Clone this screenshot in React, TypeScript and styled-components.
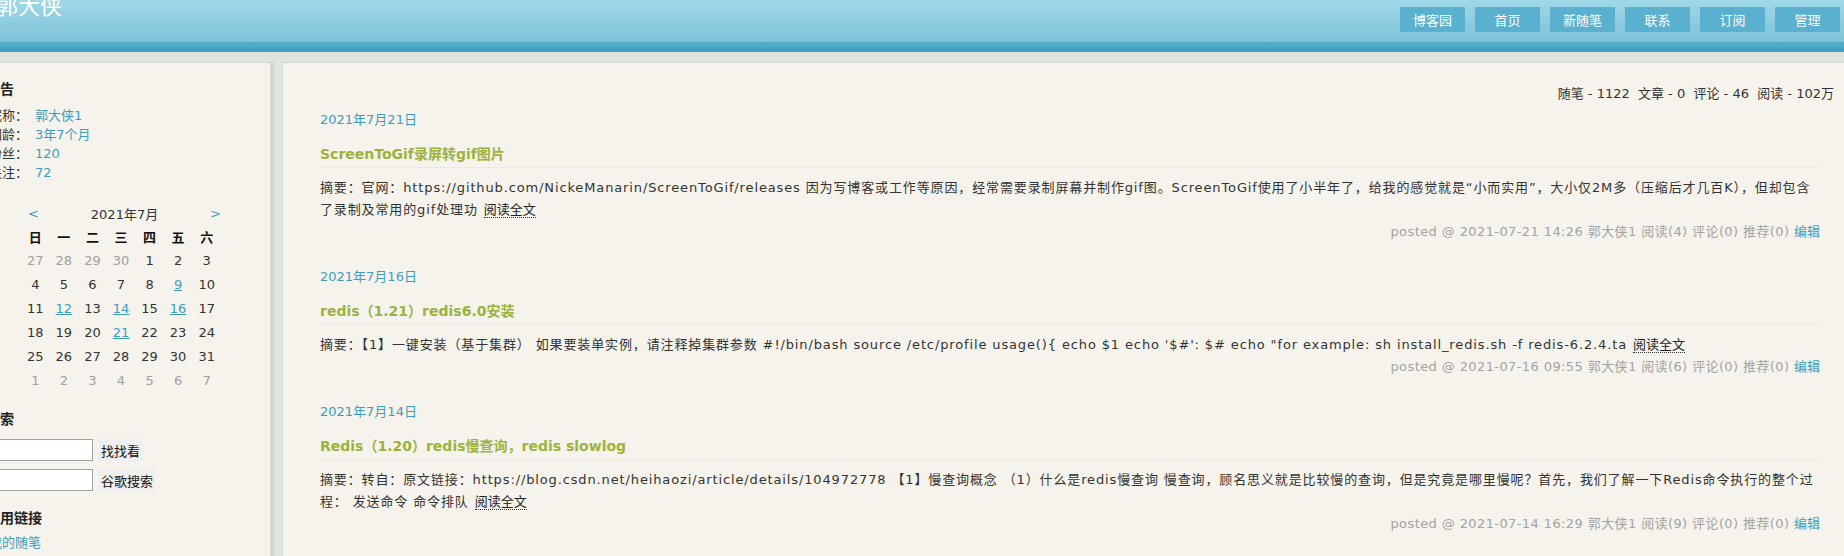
import React from "react";
import styled, { createGlobalStyle } from "styled-components";

const GlobalStyle = createGlobalStyle`
  html, body {
    margin: 0;
    padding: 0;
    overflow: hidden;
  }
  body {
    background: #dde6dd;
    font-family: "DejaVu Sans", "Noto Sans CJK SC", sans-serif;
    font-size: 13px;
    color: #333;
  }
`;

const Page = styled.div`
  margin-left: -40px;
  width: calc(100% + 50px);
  min-height: 556px;
`;

const Header = styled.header`
  height: 42px;
  box-sizing: border-box;
  padding: 0 14px 0 36px;
  background: linear-gradient(#a0d8e8, #7cc1d7);
  display: flex;
  justify-content: space-between;
  align-items: flex-start;
`;

const BlogTitle = styled.a`
  color: #fff;
  font-family: "Noto Sans CJK SC", sans-serif;
  font-size: 22px;
  line-height: 22px;
  margin-top: -7px;
  text-decoration: none;
`;

const Nav = styled.nav`
  display: flex;
  gap: 10px;
  padding-top: 7px;
`;

const NavButton = styled.a`
  width: 65px;
  height: 25px;
  background: #5ab0cf;
  color: #fff;
  display: flex;
  align-items: center;
  justify-content: center;
  font-family: "Noto Sans CJK SC", sans-serif;
  font-size: 13px;
  text-decoration: none;
`;

const Band = styled.div`
  height: 10px;
  background: linear-gradient(#58aecb, #3f9cbd);
`;

const Columns = styled.div`
  display: flex;
  align-items: flex-start;
  gap: 11px;
  padding: 10px 0 0 15px;
`;

const Sidebar = styled.aside`
  flex: none;
  width: 296px;
  min-height: 600px;
  box-sizing: border-box;
  padding: 16px 13px;
  background: #f5f3ec;
  border: 1px solid #d2dad1;
  box-shadow: 3px 0 0 #cfd9cf;
`;

const SideHeading = styled.h3<{ $top?: number; $bottom?: number }>`
  margin: ${(p) => p.$top ?? 0}px 0 ${(p) => p.$bottom ?? 7}px -3px;
  font-size: 14px;
  line-height: 20px;
  font-weight: bold;
  color: #222;
`;

const InfoRow = styled.div`
  line-height: 19px;
`;

const InfoValue = styled.a`
  color: #3d9dc0;
  text-decoration: none;
  margin-left: 7px;
`;

const Calendar = styled.div`
  width: 200px;
  margin: 20px 0 0 32px;
`;

const CalHead = styled.div`
  height: 22px;
  display: flex;
  align-items: center;
  justify-content: space-between;
  padding-left: 7px;
`;

const CalArrow = styled.a`
  color: #3d9dc0;
  text-decoration: none;
`;

const CalTable = styled.table`
  width: 200px;
  border-collapse: collapse;
  table-layout: fixed;
`;

const CalTh = styled.th`
  height: 24px;
  padding: 0;
  text-align: center;
  font-weight: bold;
  color: #111;
`;

const CalTd = styled.td<{ $kind: "other" | "day" | "link" }>`
  height: 24px;
  padding: 0;
  text-align: center;
  color: ${(p) => (p.$kind === "other" ? "#a0a0a0" : "#333")};
`;

const CalLink = styled.a`
  color: #3d9dc0;
  text-decoration: underline;
`;

const SearchRow = styled.div<{ $top: number }>`
  display: flex;
  align-items: center;
  gap: 5px;
  margin-top: ${(p) => p.$top}px;
`;

const SearchInput = styled.input`
  width: 104px;
  height: 22px;
  box-sizing: border-box;
  border: 1px solid #a0a0a0;
  background: #fff;
  margin: 0;
`;

const SearchButton = styled.button`
  height: 22px;
  padding: 0 3px;
  border: none;
  background: #efefef;
  color: #111;
  font-family: "Noto Sans CJK SC", sans-serif;
  font-size: 13px;
`;

const SideLink = styled.a`
  display: block;
  color: #3d9dc0;
  text-decoration: none;
  line-height: 19px;
  margin-top: 5px;
`;

const Main = styled.main`
  flex: 1;
  min-width: 0;
  min-height: 600px;
  padding: 21px 20px 0 37px;
  background: #f5f3ec;
  border: 1px solid #d2dad1;
  border-right: none;
`;

const Stats = styled.div`
  text-align: right;
  line-height: 20px;
  white-space: pre;
`;

const Post = styled.article`
  margin: 6px 14px 0 0;
  & + & {
    margin-top: 24px;
  }
`;

const PostDate = styled.div`
  color: #3d9dc0;
  line-height: 20px;
`;

const PostTitle = styled.h2`
  margin: 14px 0 0;
  padding-bottom: 3px;
  border-bottom: 1px solid #ebe8df;
  font-size: 14px;
  line-height: 20px;
  font-weight: bold;
  color: #9bb33e;
`;

const Summary = styled.div`
  margin-top: 9px;
  line-height: 22px;
  letter-spacing: 0.87px;
`;

const ReadMore = styled.a`
  margin-left: 6px;
  color: #222;
  text-decoration: none;
  border-bottom: 1px dotted #333;
  letter-spacing: 0;
`;

const Meta = styled.div`
  text-align: right;
  line-height: 22px;
  color: #a3a3a3;
  letter-spacing: 0.4px;
`;

const EditLink = styled.a`
  color: #3d9dc0;
  text-decoration: none;
  letter-spacing: 0;
`;

type Day = { n: number; kind: "other" | "day" | "link" };

const weeks: Day[][] = (() => {
  const links = new Set([9, 12, 14, 16, 21]);
  const cells: Day[] = [];
  [27, 28, 29, 30].forEach((n) => cells.push({ n, kind: "other" }));
  for (let d = 1; d <= 31; d++) cells.push({ n: d, kind: links.has(d) ? "link" : "day" });
  for (let d = 1; d <= 7; d++) cells.push({ n: d, kind: "other" });
  const rows: Day[][] = [];
  for (let i = 0; i < 6; i++) rows.push(cells.slice(i * 7, i * 7 + 7));
  return rows;
})();

const posts = [
  {
    date: "2021年7月21日",
    title: "ScreenToGif录屏转gif图片",
    summary:
      "摘要：官网：https://github.com/NickeManarin/ScreenToGif/releases 因为写博客或工作等原因，经常需要录制屏幕并制作gif图。ScreenToGif使用了小半年了，给我的感觉就是“小而实用”，大小仅2M多（压缩后才几百K），但却包含了录制及常用的gif处理功",
    meta: "posted @ 2021-07-21 14:26 郭大侠1 阅读(4) 评论(0) 推荐(0) ",
  },
  {
    date: "2021年7月16日",
    title: "redis（1.21）redis6.0安装",
    summary:
      "摘要：【1】一键安装（基于集群） 如果要装单实例，请注释掉集群参数 #!/bin/bash source /etc/profile usage(){ echo $1 echo '$#': $# echo \"for example: sh install_redis.sh -f redis-6.2.4.ta",
    meta: "posted @ 2021-07-16 09:55 郭大侠1 阅读(6) 评论(0) 推荐(0) ",
  },
  {
    date: "2021年7月14日",
    title: "Redis（1.20）redis慢查询，redis slowlog",
    summary:
      "摘要：转自：原文链接：https://blog.csdn.net/heihaozi/article/details/104972778 【1】慢查询概念 （1）什么是redis慢查询 慢查询，顾名思义就是比较慢的查询，但是究竟是哪里慢呢？首先，我们了解一下Redis命令执行的整个过程： 发送命令 命令排队",
    meta: "posted @ 2021-07-14 16:29 郭大侠1 阅读(9) 评论(0) 推荐(0) ",
  },
];

const navItems = ["博客园", "首页", "新随笔", "联系", "订阅", "管理"];

export default function App() {
  return (
    <>
      <GlobalStyle />
      <Page>
        <Header>
          <BlogTitle href="#">郭大侠</BlogTitle>
          <Nav>
            {navItems.map((t) => (
              <NavButton key={t} href="#">
                {t}
              </NavButton>
            ))}
          </Nav>
        </Header>
        <Band />
        <Columns>
          <Sidebar>
            <SideHeading>公告</SideHeading>
            <InfoRow>
              昵称：<InfoValue href="#">郭大侠1</InfoValue>
            </InfoRow>
            <InfoRow>
              园龄：<InfoValue href="#">3年7个月</InfoValue>
            </InfoRow>
            <InfoRow>
              粉丝：<InfoValue href="#">120</InfoValue>
            </InfoRow>
            <InfoRow>
              关注：<InfoValue href="#">72</InfoValue>
            </InfoRow>

            <Calendar>
              <CalHead>
                <CalArrow href="#">&lt;</CalArrow>
                <span>2021年7月</span>
                <CalArrow href="#">&gt;</CalArrow>
              </CalHead>
              <CalTable>
                <thead>
                  <tr>
                    {["日", "一", "二", "三", "四", "五", "六"].map((d) => (
                      <CalTh key={d}>{d}</CalTh>
                    ))}
                  </tr>
                </thead>
                <tbody>
                  {weeks.map((w, i) => (
                    <tr key={i}>
                      {w.map((d, j) => (
                        <CalTd key={j} $kind={d.kind}>
                          {d.kind === "link" ? <CalLink href="#">{d.n}</CalLink> : d.n}
                        </CalTd>
                      ))}
                    </tr>
                  ))}
                </tbody>
              </CalTable>
            </Calendar>

            <SideHeading $top={17} $bottom={0}>
              搜索
            </SideHeading>
            <SearchRow $top={10}>
              <SearchInput type="text" />
              <SearchButton>找找看</SearchButton>
            </SearchRow>
            <SearchRow $top={8}>
              <SearchInput type="text" />
              <SearchButton>谷歌搜索</SearchButton>
            </SearchRow>

            <SideHeading $top={17} $bottom={0}>
              常用链接
            </SideHeading>
            <SideLink href="#">我的随笔</SideLink>
          </Sidebar>

          <Main>
            <Stats>{"随笔 - 1122  文章 - 0  评论 - 46  阅读 - 102万"}</Stats>
            {posts.map((p) => (
              <Post key={p.date}>
                <PostDate>{p.date}</PostDate>
                <PostTitle>{p.title}</PostTitle>
                <Summary>
                  {p.summary}
                  <ReadMore href="#">阅读全文</ReadMore>
                </Summary>
                <Meta>
                  {p.meta}
                  <EditLink href="#">编辑</EditLink>
                </Meta>
              </Post>
            ))}
          </Main>
        </Columns>
      </Page>
    </>
  );
}
